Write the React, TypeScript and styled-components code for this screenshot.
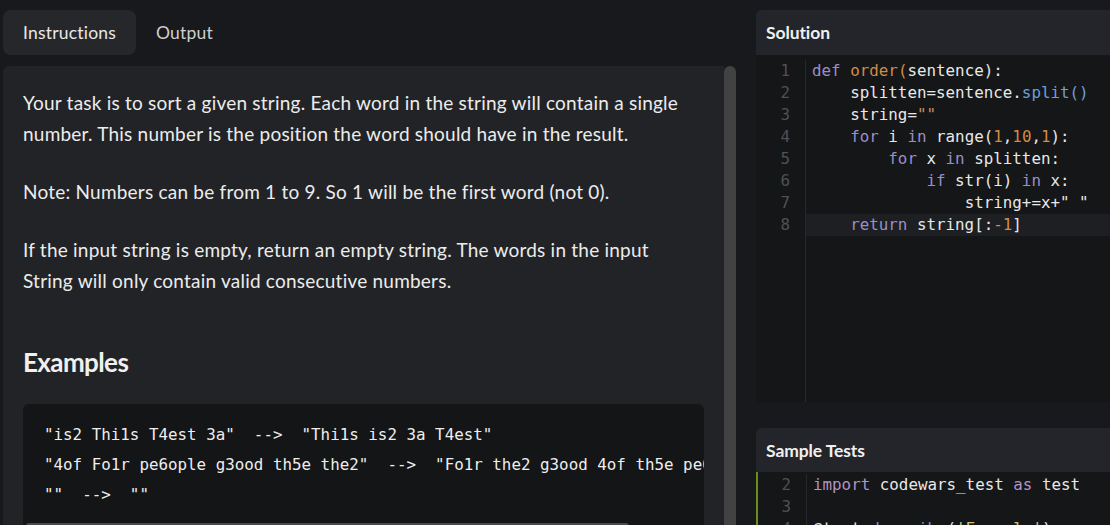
import React from "react";
import styled, { createGlobalStyle } from "styled-components";

const Global = createGlobalStyle`
  html, body {
    margin: 0;
    padding: 0;
    width: 1110px;
    height: 525px;
    overflow: hidden;
    background: #18191c;
  }
  * { box-sizing: border-box; font-variant-ligatures: none; }
`;

const Page = styled.div`
  display: flex;
  gap: 20px;
  height: 525px;
  padding: 10px 0 0 3px;
  font-family: Lato, "Open Sans", sans-serif;
  color: #e6e6e6;
`;

const LeftCol = styled.div`
  width: 733px;
  flex-shrink: 0;
  display: flex;
  flex-direction: column;
  gap: 11px;
`;

const TabBar = styled.div`
  display: flex;
  height: 45px;
  flex-shrink: 0;
`;

const Tab = styled.div<{ $active?: boolean }>`
  display: flex;
  align-items: center;
  padding: 0 20px;
  border-radius: 8px;
  font-size: 17.5px;
  letter-spacing: 0.2px;
  color: ${(p) => (p.$active ? "#e8e8e8" : "#cfcfcf")};
  background: ${(p) => (p.$active ? "#26272b" : "transparent")};
`;

const Panel = styled.div`
  flex: 1;
  min-height: 0;
  display: flex;
`;

const Content = styled.div`
  flex: 1;
  min-width: 0;
  background: #222327;
  border-top-left-radius: 6px;
  padding: 21px 20px 0 20px;
  overflow: hidden;
`;

const VScroll = styled.div`
  width: 12px;
  background: #424242;
  border-radius: 6px 6px 0 0;
`;

const Para = styled.p`
  margin: 0 0 27px 0;
  font-size: 19px;
  letter-spacing: 0.22px;
  line-height: 31px;
  color: #ececec;
`;

const Heading = styled.h2`
  margin: 48px 0 24px 0;
  font-size: 26px;
  line-height: 36px;
  font-weight: 700;
  letter-spacing: -0.6px;
  color: #f0f0f0;
`;

const CodeBlock = styled.div`
  background: #141516;
  border-radius: 6px 6px 0 0;
  display: flex;
  flex-direction: column;
`;

const Pre = styled.pre`
  margin: 0;
  padding: 16px 21px 13px 21px;
  overflow: hidden;
  font-family: "DejaVu Sans Mono", "Liberation Mono", monospace;
  font-size: 15.85px;
  line-height: 30px;
  color: #eeeeee;
  white-space: pre;
`;

const HScroll = styled.div`
  height: 6px;
  margin: 0 75px 0 3px;
  background: #4a4a4a;
  border-radius: 3px;
`;

const RightCol = styled.div`
  width: 420px;
  flex-shrink: 0;
  display: flex;
  flex-direction: column;
`;

const CardHeader = styled.div<{ $h: number }>`
  height: ${(p) => p.$h}px;
  flex-shrink: 0;
  display: flex;
  align-items: center;
  padding-left: 10px;
  background: #24252a;
  border-top-left-radius: 6px;
  font-size: 17.5px;
  font-weight: 700;
  letter-spacing: -0.1px;
  color: #f0f0f0;
`;

const Editor = styled.div<{ $h: number; $accent?: boolean; $pt: number }>`
  height: ${(p) => p.$h}px;
  flex-shrink: 0;
  display: flex;
  background: #151617;
  border-left: ${(p) => (p.$accent ? "2px solid #6e8b1e" : "0")};
  font-family: "DejaVu Sans Mono", "Liberation Mono", monospace;
  font-size: 15.85px;
  line-height: 22px;
  overflow: hidden;
  padding-top: ${(p) => p.$pt}px;
`;

const Gutter = styled.div<{ $w: number }>`
  width: ${(p) => p.$w}px;
  flex-shrink: 0;
  border-right: 1px solid #27282b;
  text-align: right;
  padding-right: 15px;
  color: #4f5155;
`;

const Lines = styled.div`
  flex: 1;
  min-width: 0;
`;

const Line = styled.div<{ $hl?: boolean }>`
  height: 22px;
  padding-left: 6px;
  white-space: pre;
  color: #e8e8e8;
  background: ${(p) => (p.$hl ? "#1e1f22" : "transparent")};
`;

const Kw = styled.span`
  color: #9b8fcb;
`;
const Kw2 = styled.span`
  color: #b293c4;
`;
const Fn = styled.span`
  color: #d48a45;
`;
const Num = styled.span`
  color: #d48a45;
`;
const Str = styled.span`
  color: #d9895f;
`;
const Meth = styled.span`
  color: #6f9fd6;
`;
const YStr = styled.span`
  color: #c8c27a;
`;

const Spacer = styled.div`
  height: 26px;
  flex-shrink: 0;
`;

export default function App() {
  return (
    <>
      <Global />
      <Page>
        <LeftCol>
          <TabBar>
            <Tab $active>Instructions</Tab>
            <Tab>Output</Tab>
          </TabBar>
          <Panel>
            <Content>
              <Para>
                Your task is to sort a given string. Each word in the string will contain a single
                number. This number is the position the word should have in the result.
              </Para>
              <Para>Note: Numbers can be from 1 to 9. So 1 will be the first word (not 0).</Para>
              <Para>
                If the input string is empty, return an empty string. The words in the input
                <br />
                String will only contain valid consecutive numbers.
              </Para>
              <Heading>Examples</Heading>
              <CodeBlock>
                <Pre>
                  {`"is2 Thi1s T4est 3a"  -->  "Thi1s is2 3a T4est"
"4of Fo1r pe6ople g3ood th5e the2"  -->  "Fo1r the2 g3ood 4of th5e pe6ople"
""  -->  ""`}
                </Pre>
                <HScroll />
              </CodeBlock>
            </Content>
            <VScroll />
          </Panel>
        </LeftCol>
        <RightCol>
          <CardHeader $h={45}>Solution</CardHeader>
          <Editor $h={347} $pt={5}>
            <Gutter $w={50}>
              {[1, 2, 3, 4, 5, 6, 7, 8].map((n) => (
                <div key={n}>{n}</div>
              ))}
            </Gutter>
            <Lines>
              <Line>
                <Kw>def</Kw> <Fn>order</Fn>
                <Fn>(</Fn>sentence):
              </Line>
              <Line>
                {"    "}splitten=sentence.<Meth>split()</Meth>
              </Line>
              <Line>
                {"    "}string=<Str>""</Str>
              </Line>
              <Line>
                {"    "}
                <Kw>for</Kw> i <Kw>in</Kw> range(<Num>1</Num>,<Num>10</Num>,<Num>1</Num>):
              </Line>
              <Line>
                {"        "}
                <Kw>for</Kw> x <Kw>in</Kw> splitten:
              </Line>
              <Line>
                {"            "}
                <Kw>if</Kw> str(i) <Kw>in</Kw> x:
              </Line>
              <Line>
                {"                "}string+=x+" "
              </Line>
              <Line $hl>
                {"    "}
                <Kw>return</Kw> string[:<Num>-1</Num>]
              </Line>
            </Lines>
          </Editor>
          <Spacer />
          <CardHeader $h={44}>Sample Tests</CardHeader>
          <Editor $h={100} $accent $pt={2}>
            <Gutter $w={49}>
              <div>2</div>
              <div>3</div>
              <div>4</div>
            </Gutter>
            <Lines>
              <Line>
                <Kw2>import</Kw2> codewars_test <Kw2>as</Kw2> test
              </Line>
              <Line> </Line>
              <Line>
                @test.<Meth>describe</Meth>(<YStr>'Example'</YStr>)
              </Line>
            </Lines>
          </Editor>
        </RightCol>
      </Page>
    </>
  );
}
